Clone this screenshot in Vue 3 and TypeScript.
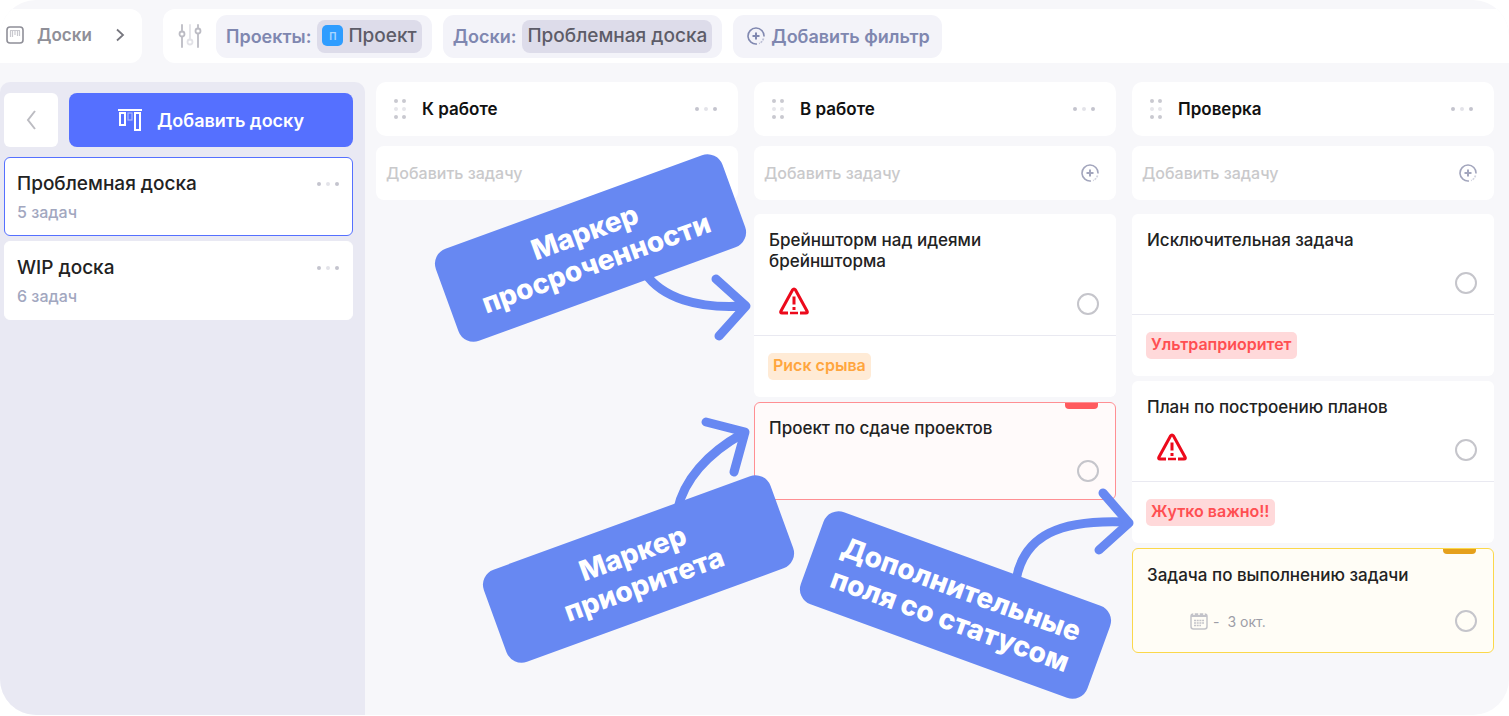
<script setup lang="ts">
import { ref } from 'vue'

interface Board { id: number; title: string; count: string }
interface Task {
  title: string
  tone?: 'red' | 'yellow'
  warning?: boolean
  date?: string
  tag?: { text: string; tone: 'orange' | 'red' }
}
interface Column { title: string; tasks: Task[] }

const boards: Board[] = [
  { id: 1, title: 'Проблемная доска', count: '5 задач' },
  { id: 2, title: 'WIP доска', count: '6 задач' },
]
const activeBoard = ref(1)

const columns: Column[] = [
  { title: 'К работе', tasks: [] },
  {
    title: 'В работе',
    tasks: [
      { title: 'Брейншторм над идеями брейншторма', warning: true, tag: { text: 'Риск срыва', tone: 'orange' } },
      { title: 'Проект по сдаче проектов', tone: 'red' },
    ],
  },
  {
    title: 'Проверка',
    tasks: [
      { title: 'Исключительная задача', tag: { text: 'Ультраприоритет', tone: 'red' } },
      { title: 'План по построению планов', warning: true, tag: { text: 'Жутко важно!!', tone: 'red' } },
      { title: 'Задача по выполнению задачи', tone: 'yellow', date: '3 окт.' },
    ],
  },
]
</script>

<template>
  <div class="app">
    <header class="topbar">
      <nav class="crumbs">
        <svg class="crumb-icon" viewBox="0 0 18 18" fill="none" stroke="#8f8f98">
          <rect x="1" y="1" width="16" height="16" rx="3" stroke-width="1.6" />
          <path d="M4 4.5h10" stroke="#c9c9cf" />
          <path d="M4.5 5v6M6.5 5v6M9 5v4M11.500 5v5M13.500 5v5" stroke="#c9c9cf" stroke-width="1.200" />
        </svg>
        <a href="#">Доски</a>
        <svg class="crumb-arrow" viewBox="0 0 10 14" fill="none" stroke="#77777f" stroke-width="1.800">
          <path d="M2 1.500l6 5.500-6 5.500" />
        </svg>
      </nav>
      <div class="filters">
        <svg class="sliders" viewBox="0 0 24 24" fill="none" stroke="#bcbcc4" stroke-width="1.800" stroke-linecap="round">
          <path d="M4 1v6M4 13v10M20 1v3M20 10v13" />
          <circle cx="4" cy="10" r="2.500" />
          <circle cx="20" cy="7" r="2.500" />
          <path d="M12 1v14" stroke="#e2e2e7" />
          <circle cx="12" cy="18" r="2.500" stroke="#e2e2e7" />
        </svg>
        <button class="chip" type="button">
          <span>Проекты:</span>
          <span class="value"><span class="avatar">п</span>Проект</span>
        </button>
        <button class="chip" type="button">
          <span>Доски:</span>
          <span class="value">Проблемная доска</span>
        </button>
        <button class="chip add" type="button">
          <svg class="plus" viewBox="0 0 18 18" fill="none" stroke="#8088b0" stroke-width="1.600">
            <path d="M10 17A8 8 0 1 1 17 9.500" />
            <path d="M16.500 11.500a8 8 0 0 1-4.500 5" stroke-dasharray="2 1" opacity=".5" />
            <path d="M9 5.500v7M5.500 9h7" stroke-width="2" />
          </svg>
          <span>Добавить фильтр</span>
        </button>
      </div>
    </header>

    <main class="workspace">
      <aside class="sidebar">
        <div class="actions">
          <button class="back" type="button" aria-label="Назад">
            <svg viewBox="0 0 12 20" fill="none" stroke="#bcbcc2" stroke-width="2"><path d="M10 1L3 10l7 9" /></svg>
          </button>
          <button class="add-board" type="button">
            <svg viewBox="0 0 24 24" fill="none" stroke="#fff" stroke-width="2">
              <path d="M0 2h24" />
              <rect x="2" y="5" width="5" height="12" stroke-width="2" />
              <rect x="10" y="5" width="4" height="7" stroke-width="1.200" opacity=".5" />
              <rect x="17" y="5" width="5" height="17" stroke-width="2" />
            </svg>
            <span>Добавить доску</span>
          </button>
        </div>
        <div
          v-for="board in boards"
          :key="board.id"
          class="board"
          :class="{ active: board.id === activeBoard }"
          @click="activeBoard = board.id"
        >
          <div>
            <a class="board-title" href="#">{{ board.title }}</a>
            <p class="board-count">{{ board.count }}</p>
          </div>
          <button class="dots" type="button" aria-label="Меню доски"><i /><i /><i /></button>
        </div>
      </aside>

      <section v-for="(column, ci) in columns" :key="column.title" class="column">
        <header class="column-head">
          <span class="grip"><i v-for="n in 6" :key="n" /></span>
          <h2>{{ column.title }}</h2>
          <button class="dots" type="button" aria-label="Меню колонки"><i /><i /><i /></button>
        </header>
        <div class="new-task">
          <input :id="`new-${ci}`" type="text" placeholder="Добавить задачу" :aria-label="`Добавить задачу: ${column.title}`" />
          <button type="button" aria-label="Добавить">
            <svg class="plus" viewBox="0 0 18 18" fill="none" stroke="#a3a6bd" stroke-width="1.600">
              <path d="M10 17A8 8 0 1 1 17 9.500" />
              <path d="M16.500 11.500a8 8 0 0 1-4.500 5" stroke-dasharray="2 1" opacity=".5" />
              <path d="M9 5.500v7M5.500 9h7" stroke-width="2" />
            </svg>
          </button>
        </div>
        <div class="tasks">
          <article v-for="(task, ti) in column.tasks" :key="task.title" class="task" :class="task.tone">
            <div class="task-body">
              <label class="task-title" :for="`task-${ci}-${ti}`">{{ task.title }}</label>
              <div class="task-row">
                <svg v-if="task.warning" class="warning" viewBox="0 0 30 28" fill="none" stroke="#ec0a1c" stroke-width="3" stroke-linejoin="round">
                  <path d="M9 26H3Q1 26 2 24L13.500 3Q15 1 16.500 3L28 24Q29 26 27 26H21" />
                  <path d="M11 26h8" stroke-width="2.500" />
                  <path d="M15 9.500v8M15 20v3" />
                </svg>
                <span v-if="task.date" class="date">
                  <svg viewBox="0 0 18 18" fill="none" stroke="#c3c3c9" stroke-width="1.500">
                    <rect x="1" y="2" width="16" height="15" rx="2.500" />
                    <path d="M1 3.500h16" stroke-width="3" />
                    <path d="M4 0v3M9 0v3M14 0v3" stroke="#fffdf6" />
                    <path d="M4 8.500h10M4 11h10M4 13.500h7" stroke-dasharray="2 .7" stroke-width="1.300" />
                  </svg>
                  <span>-</span>
                  <time>{{ task.date }}</time>
                </span>
                <input :id="`task-${ci}-${ti}`" class="done" type="checkbox" />
              </div>
            </div>
            <footer v-if="task.tag" class="task-foot">
              <span class="tag" :class="task.tag.tone">{{ task.tag.text }}</span>
            </footer>
          </article>
        </div>
      </section>
    </main>

    <!-- Callouts drawn over the board -->
    <div class="callouts">
      <svg class="arrows" width="1509" height="715" viewBox="0 0 1509 715" fill="none" stroke="#6788f2" stroke-width="9" stroke-linecap="round" stroke-linejoin="round">
        <path d="M645 273C662 298 698 309 744 306" />
        <path d="M716 279L746 306L719 336" />
        <path d="M677 512C683 480 708 453 742 434" />
        <path d="M706 422L745 432L734 472" />
        <path d="M1016 580C1024 535 1060 519 1127 522" />
        <path d="M1103 493L1129 523L1099 550" />
      </svg>
      <p class="callout overdue">Маркер<br />просроченности</p>
      <p class="callout priority">Маркер<br />приоритета</p>
      <p class="callout fields">Дополнительные<br />поля со статусом</p>
    </div>
  </div>
</template>

<style>
body { margin: 0; background: #fff; }
</style>

<style scoped>
* { box-sizing: border-box; margin: 0; }
.app {
  position: relative;
  display: flex;
  flex-direction: column;
  gap: 19px;
  min-height: calc(100vh - 1px);
  padding-top: 9px;
  border-radius: 36px;
  overflow: hidden;
  background: #f7f7fa;
  font-family: Inter, "Liberation Sans", sans-serif;
  color: #222;
}
button { border: 0; padding: 0; background: none; font: inherit; color: inherit; cursor: pointer; }
a { color: inherit; text-decoration: none; }

.topbar { display: flex; gap: 21px; height: 54px; }
.crumbs {
  display: flex; align-items: center; width: 142px; padding: 0 17px 2px 6px;
  border-radius: 0 12px 12px 0; background: #fff;
  font-size: 17px; font-weight: 600; color: #8f8f98;
}
.crumb-icon { width: 18px; height: 18px; margin-right: 13px; }
.crumb-arrow { width: 10px; height: 14px; margin-left: auto; }
.filters {
  flex: 1; display: flex; align-items: center; gap: 11px; padding-left: 15px;
  border-radius: 12px 0 0 12px; background: #fff;
}
.sliders { width: 24px; height: 24px; margin-right: 3px; }
.chip {
  display: flex; align-items: center; gap: 6px; height: 43px; padding: 0 10px;
  border-radius: 11px; background: #f3f3f9;
  font-size: 18px; font-weight: 600; color: #7f87b0; white-space: nowrap;
}
.chip.add { padding: 0 12px 0 14px; }
.value {
  display: flex; align-items: center; gap: 5px; height: 33px; padding: 0 5px 2px;
  border-radius: 8px; background: #dddcea; color: #5d5c68; font-size: 19px; font-weight: 500;
}
.avatar {
  display: grid; place-items: center; width: 21px; height: 21px;
  border-radius: 5px; background: #2f9dff; color: #a9d6ff; font-size: 13px;
}
.plus { display: block; width: 18px; height: 18px; }

.workspace { flex: 1; display: flex; gap: 16px; padding-right: 15px; }
.sidebar {
  display: flex; flex-direction: column; gap: 5px; width: 365px; margin-right: -5px;
  padding: 11px 12px 11px 4px; border-radius: 10px 10px 0 0; background: #e9e9f3;
}
.actions { display: flex; gap: 11px; margin-bottom: 5px; }
.back {
  display: grid; place-items: center; width: 54px; height: 54px;
  border-radius: 6px; background: #fff;
}
.back svg { width: 12px; height: 20px; }
.add-board {
  flex: 1; display: flex; align-items: center; justify-content: center; gap: 15px;
  border-radius: 8px; background: #5570ff; color: #fff; font-size: 18px; font-weight: 600;
}
.add-board svg { width: 24px; height: 24px; }
.board {
  display: flex; justify-content: space-between; align-items: flex-start; height: 79px;
  padding: 14px 13px 0 12px; border: 1px solid #fff; border-radius: 6px; background: #fff;
}
.board.active { border-color: #5570ff; }
.board-title { display: block; font-size: 19px; line-height: 24px; font-weight: 500; }
.board-count { margin-top: 6px; font-size: 16px; line-height: 20px; font-weight: 500; color: #a2a7bf; }
.dots { display: flex; gap: 5px; height: 24px; align-items: center; }
.dots i { width: 4px; height: 4px; border-radius: 50%; background: #c4c4ce; }
.dots i:nth-child(2) { background: #e3e3e9; }

.column { flex: 1; min-width: 0; }
.column-head {
  display: flex; align-items: center; height: 54px; padding: 0 21px 0 18px;
  border-radius: 10px; background: #fff;
}
.column-head h2 { flex: 1; margin-left: 16px; font-size: 17px; font-weight: 600; color: #111; }
.grip { display: grid; grid-template-columns: 4px 4px; gap: 4px 4px; }
.grip i { width: 4px; height: 4px; border-radius: 50%; background: #c9c9d0; }
.grip i:nth-child(3), .grip i:nth-child(4) { background: #e6e6ea; }
.new-task {
  display: flex; align-items: center; height: 54px; margin-top: 10px; padding: 0 17px 0 10px;
  border-radius: 8px; background: #fff;
}
.new-task input {
  flex: 1; min-width: 0; padding: 0; border: 0; outline: 0; background: none;
  font: 500 16px/24px Inter, "Liberation Sans", sans-serif; color: #222;
}
.new-task input::placeholder { color: #c9c9cb; opacity: 1; }
.tasks { display: flex; flex-direction: column; gap: 5px; margin-top: 14px; }
.task { position: relative; border-radius: 6px; background: #fff; }
.task-body { padding: 16px 17px 20px 15px; }
.task-title { display: block; max-width: 270px; font-size: 17px; line-height: 21px; font-weight: 500; }
.task-row { display: flex; align-items: flex-end; height: 43px; }
.done {
  appearance: none; width: 22px; height: 22px; margin: 0 0 0 auto;
  border: 2px solid #c5c5cb; border-radius: 50%;
}
.warning { width: 30px; height: 28px; margin-left: 10px; }
.task-foot { padding: 17px 14px; border-top: 1px solid #e9e9f1; }
.tag {
  display: block; width: max-content; height: 27px; padding: 0 5px; border-radius: 5px;
  font-size: 16px; line-height: 25px; font-weight: 600;
}
.tag.orange { background: #ffebd6; color: #ffa63e; }
.tag.red { background: #ffd9da; color: #ff4f52; }
.task.red, .task.yellow { border: 1px solid; }
.task.red { border-color: #ff8f93; background: #fffafa; }
.task.yellow { border-color: #fbd84b; background: #fffdf6; }
.task.red .task-body { padding: 15px 16px 17px 14px; }
.task.yellow .task-body { padding: 16px 16px 20px 14px; }
.task.yellow .task-row { height: 46px; }
.task.red::after, .task.yellow::after {
  content: ""; position: absolute; top: 0; right: 17px; width: 33px; height: 6px;
  border-radius: 0 0 4px 4px; background: #ff5a5e;
}
.task.yellow::after { height: 5px; background: #e5a01c; }
.date { display: flex; align-items: center; gap: 5px; height: 22px; margin-left: 43px; font-size: 14px; color: #9d9da7; }
.date svg { width: 18px; height: 18px; }
.date time { margin-left: 3px; }

.callouts { position: absolute; inset: 0; pointer-events: none; }
.arrows { position: absolute; top: 0; left: 0; }
.callout {
  position: absolute; display: grid; place-content: center; width: 305px; height: 98px;
  border-radius: 16px; background: #6788f2; color: #fff;
  font-size: 28px; line-height: 33px; font-weight: 800; text-align: center; white-space: nowrap;
  transform: rotate(-20deg);
}
.overdue { left: 438px; top: 199px; }
.priority { left: 486px; top: 520px; }
.fields { left: 803px; top: 556px; transform: rotate(20deg); }
</style>
